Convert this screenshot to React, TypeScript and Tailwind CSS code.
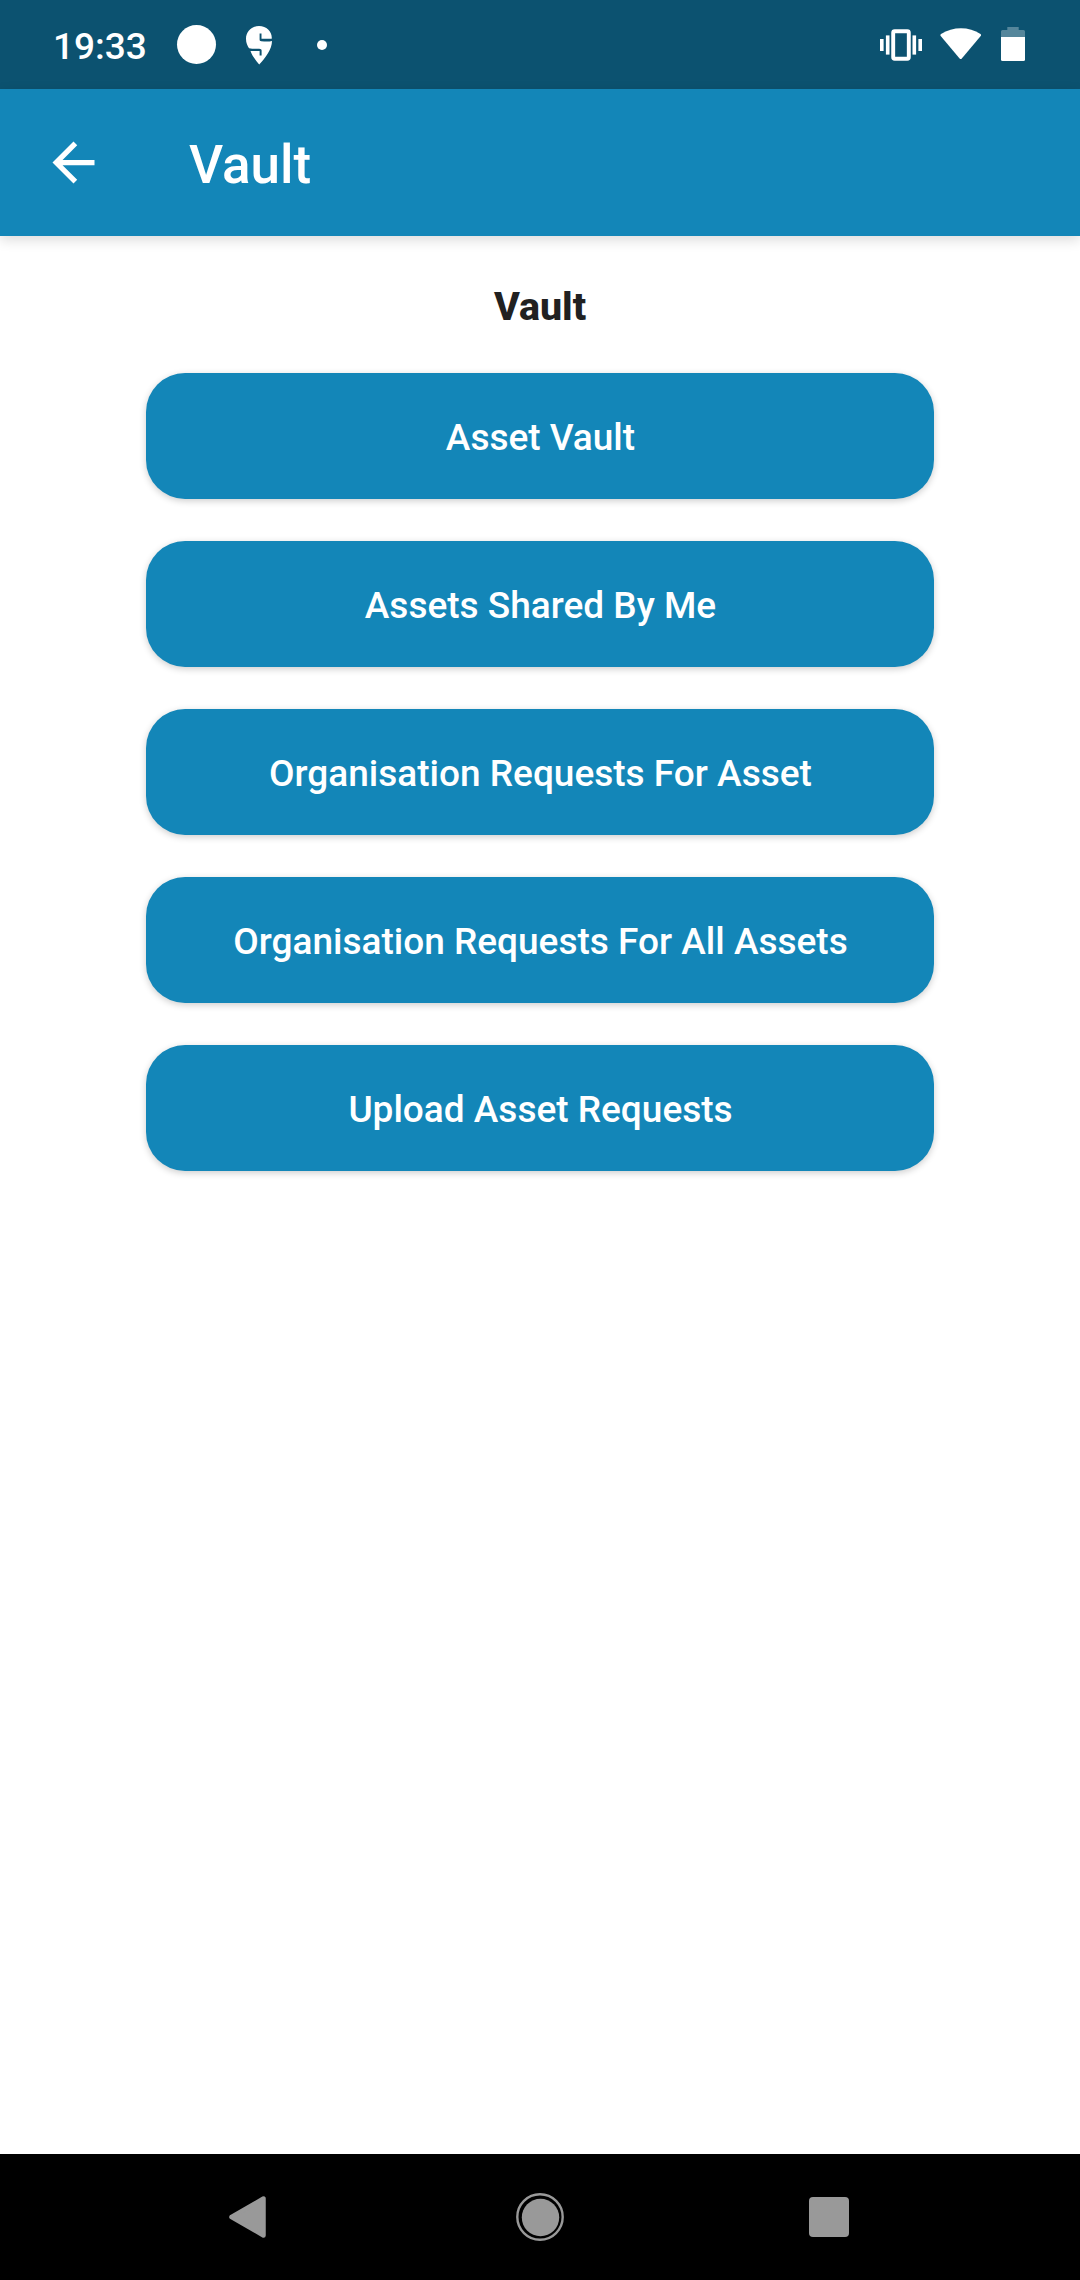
import React from "react";

const actions = [
  "Asset Vault",
  "Assets Shared By Me",
  "Organisation Requests For Asset",
  "Organisation Requests For All Assets",
  "Upload Asset Requests",
];

function DeliveryPinIcon() {
  return (
    <svg className="ml-[29px] h-[40px] w-[28px]" viewBox="0 0 28 40" fill="#fff">
      <path d="M14 1C6.6 1 1 6.700 1 13.800C1 18 2.400 20.700 4 23.300C8 24.200 12 23.700 15.200 23.900C16.300 24 16.600 24.400 16.600 25.500V30.500H14.600V26H5.500C6.800 30 10.600 35.500 14.200 39.500C20.500 32.500 27 24.200 27 15.900C23.500 17 19.500 16.400 16.300 16.200C15 16.100 14.600 15.600 14.600 14.500V8.500H16.500V13.800H26.700C27.400 7 22 1 14 1Z" />
    </svg>
  );
}

function VibrateIcon() {
  return (
    <svg className="h-[32px] w-[42px]" viewBox="0 0 42 32" fill="#fff">
      <rect x="0" y="10" width="3.600" height="12" />
      <rect x="5.900" y="6.400" width="3.600" height="19.200" />
      <rect x="13.200" y="2.200" width="15.600" height="27.600" rx="1.500" fill="none" stroke="#fff" strokeWidth="3.900" />
      <rect x="32.500" y="6.400" width="3.600" height="19.200" />
      <rect x="38.400" y="10" width="3.600" height="12" />
    </svg>
  );
}

function WifiIcon() {
  return (
    <svg className="mt-[-2px] ml-[18px] h-[34px] w-[42px]" viewBox="0 0 42 34" fill="#fff">
      <path d="M.7 9Q0 8 1 7.100C13 -.7 29 -.7 40.500 7.100Q41.500 8 40.700 9L21.800 31.500Q20.700 32.600 19.600 31.500Z" />
    </svg>
  );
}

function BatteryIcon() {
  return (
    <svg className="mt-[-1px] ml-[19px] h-[34px] w-[24px]" viewBox="0 0 24 34" fill="#fff">
      <path d="M6.300 0H17.700V3H22.500Q24 3 24 4.500V10H0V4.500Q0 3 1.500 3H6.300Z" opacity=".3" />
      <path d="M0 10H24V32.500Q24 34 22.500 34H1.500Q0 34 0 32.500Z" />
    </svg>
  );
}

function StatusBar() {
  return (
    <div className="flex h-[89px] items-center bg-[#0c5270] pl-[53px] pr-[55px]">
      <span className="mt-[4px] w-[94px] text-[37px] font-medium leading-none whitespace-nowrap">19:33</span>
      <div className="ml-[30px] size-[39px] rounded-full bg-white" />
      <DeliveryPinIcon />
      <div className="ml-[44px] size-[10px] rounded-full bg-white" />
      <div className="ml-auto flex items-center">
        <VibrateIcon />
        <WifiIcon />
        <BatteryIcon />
      </div>
    </div>
  );
}

function AppBar() {
  return (
    <header className="z-10 flex h-[147px] items-center bg-[#1386b8] pl-[42px] shadow-[0_4px_12px_rgba(0,0,0,0.14)]">
      <svg className="size-[63px]" viewBox="0 0 24 24" fill="#fff">
        <path d="M20 11H7.830l5.590-5.590L12 4l-8 8 8 8 1.410-1.410L7.830 13H20v-2z" />
      </svg>
      <h1 className="mt-[5px] ml-[84px] text-[53px] font-medium leading-none">Vault</h1>
    </header>
  );
}

function NavigationBar() {
  return (
    <nav className="flex h-[126px] items-center bg-black pl-[229px]">
      <svg className="h-[44px] w-[38px]" viewBox="0 0 38 44">
        <path d="M2.500 22L34.500 3.500V40.500Z" fill="#999" stroke="#999" strokeWidth="4.500" strokeLinejoin="round" />
      </svg>
      <svg className="ml-[249px] size-[48px]" viewBox="0 0 48 48">
        <circle cx="24" cy="24" r="22.700" fill="none" stroke="#999" strokeWidth="2.400" />
        <circle cx="24.500" cy="24.500" r="18.700" fill="#999" />
      </svg>
      <div className="ml-[245px] size-[40px] rounded-[4px] bg-[#999]" />
    </nav>
  );
}

export default function App() {
  return (
    <div className="flex h-[2280px] w-[1080px] flex-col bg-white font-['Roboto',sans-serif] text-white">
      <StatusBar />
      <AppBar />
      <main className="flex flex-1 flex-col items-center pt-[51px]">
        <h2 className="h-[86px] text-[39.400px] font-extrabold leading-[40px] text-[#212121]">Vault</h2>
        <div className="flex w-[788px] flex-col gap-[42px]">
          {actions.map((label) => (
            <button
              key={label}
              className="h-[126px] rounded-[39px] bg-[#1386b8] pt-[3px] pl-px text-[37px] font-medium whitespace-nowrap shadow-[0_2px_7px_rgba(0,0,0,0.2)]"
            >
              {label}
            </button>
          ))}
        </div>
      </main>
      <NavigationBar />
    </div>
  );
}
